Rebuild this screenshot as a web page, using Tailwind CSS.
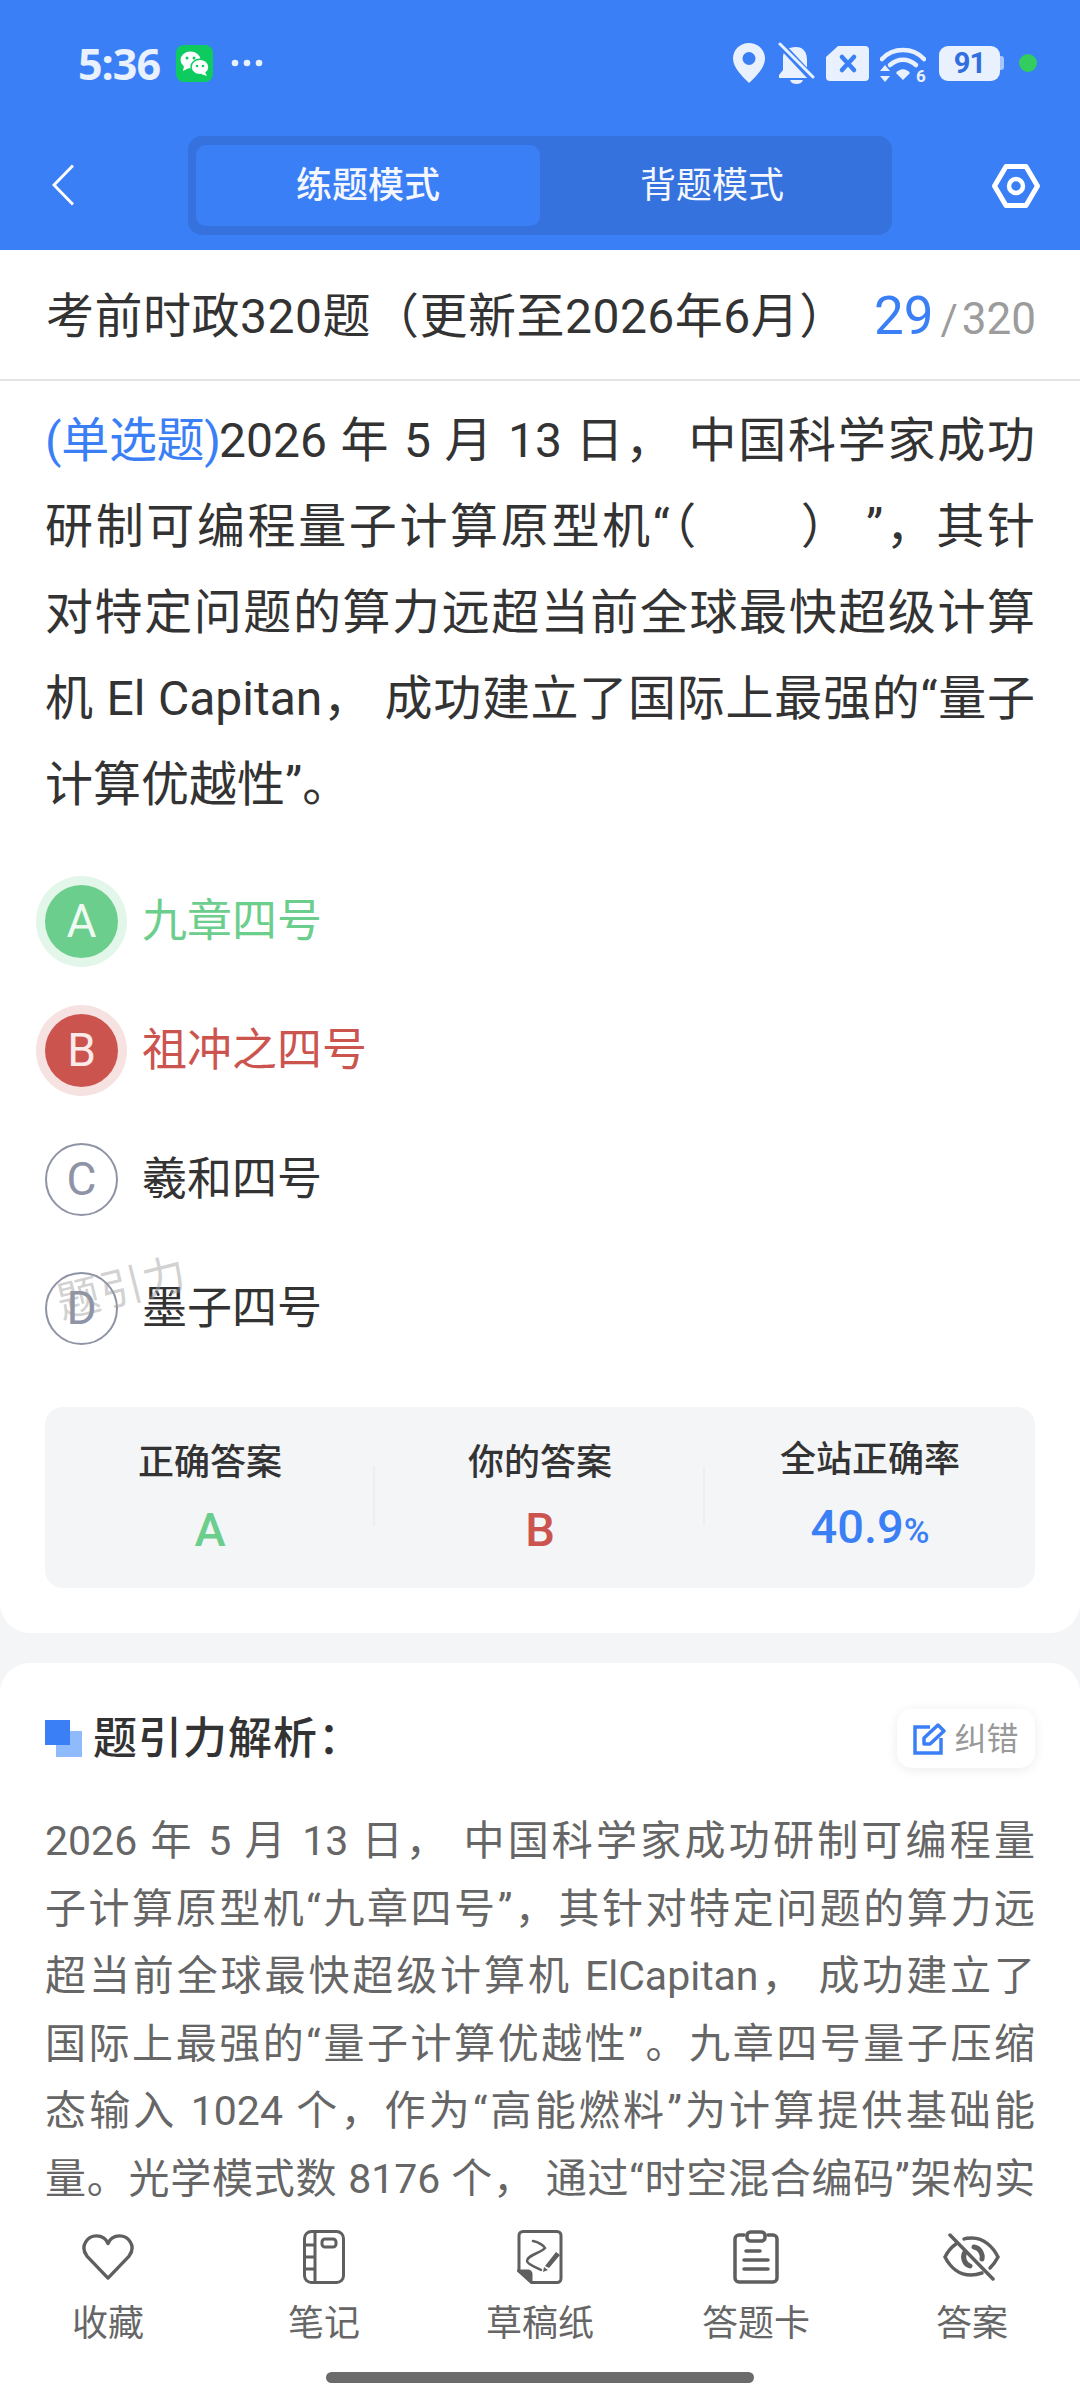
<!DOCTYPE html>
<html lang="zh-CN">
<head>
    <meta charset="UTF-8">
    <meta name="viewport" content="width=device-width, initial-scale=1.0">
    <title>考前时政320题</title>
    <script src="https://cdn.jsdelivr.net/npm/@tailwindcss/browser@4"></script>
</head>
<body class="bg-[#f4f5f7]">
<div class="relative flex flex-col w-[1080px] h-[2400px] overflow-hidden bg-[#f4f5f7] font-['Roboto','Noto_Sans_CJK_SC',sans-serif]">

    <!-- blue header -->
    <header class="h-[250px] shrink-0 bg-[#3b7ff6]">
        <div class="flex items-center h-[126px] pl-[78px] pr-[43px]">
            <span class="text-[43px] font-bold leading-none text-[#e9f0fe] font-['Open_Sans',sans-serif] tracking-[-1px]">5:36</span>
            <svg class="ml-[16px]" width="37" height="37" viewBox="0 0 37 37">
                <rect width="37" height="37" rx="8" fill="#0ecb5f"/>
                <ellipse cx="14.500" cy="15" rx="10" ry="8.500" fill="#fff"/>
                <path d="M8 21l-1 5 6-3z" fill="#fff"/>
                <ellipse cx="24" cy="22" rx="9" ry="7.800" fill="#fff" stroke="#0ecb5f" stroke-width="1.500"/>
                <path d="M29 27l2 4-6-2z" fill="#fff"/>
                <circle cx="11" cy="13" r="1.500" fill="#0ecb5f"/><circle cx="18" cy="13" r="1.500" fill="#0ecb5f"/>
                <circle cx="21" cy="21" r="1.300" fill="#0ecb5f"/><circle cx="27" cy="21" r="1.300" fill="#0ecb5f"/>
            </svg>
            <svg class="ml-[18px]" width="32" height="8" viewBox="0 0 32 8" fill="#e9f0fe">
                <circle cx="4" cy="4" r="3.300"/><circle cx="16" cy="4" r="3.300"/><circle cx="28" cy="4" r="3.300"/>
            </svg>
            <div class="ml-auto flex items-center">
                <svg width="32" height="40" viewBox="0 0 32 40">
                    <path d="M16 0C7 0 0 7 0 15.500 0 25 10 34 16 40c6-6 16-15 16-24.500C32 7 25 0 16 0z" fill="#e9f0fe"/>
                    <circle cx="16" cy="15.500" r="6.500" fill="#3b7ff6"/>
                </svg>
                <svg class="ml-[13px]" width="37" height="42" viewBox="0 0 37 42">
                    <path d="M18 5c8 0 11 6 11 13v10l4 5v3H1v-3l4-5V15c0-6 5-10 13-10z" fill="#e9f0fe"/>
                    <path d="M12 38h13c-1 3-4 4-6.500 4S13 41 12 38z" fill="#e9f0fe"/>
                    <path d="M3 3l31 33" stroke="#3b7ff6" stroke-width="7"/>
                    <path d="M2 2l33 33" stroke="#e9f0fe" stroke-width="3" stroke-linecap="round"/>
                </svg>
                <svg class="ml-[11px]" width="43" height="35" viewBox="0 0 43 35">
                    <path d="M12 0h27a4 4 0 0 1 4 4v27a4 4 0 0 1-4 4H4a4 4 0 0 1-4-4V11z" fill="#e9f0fe"/>
                    <path d="M16 11l12 13M28 11L16 24" stroke="#3b7ff6" stroke-width="4.500" stroke-linecap="round"/>
                </svg>
                <svg class="ml-[11px]" width="46" height="46" viewBox="0 -6 46 46" fill="none">
                    <path d="M2 13C13 1 33 1 44 13" stroke="#e9f0fe" stroke-width="4.500" stroke-linecap="round"/>
                    <path d="M10 19c8-7 18-7 26 0" stroke="#e9f0fe" stroke-width="4.500" stroke-linecap="round"/>
                    <path d="M16 27c4-5 10-5 14 0l-7 7z" fill="#e9f0fe"/>
                    <path d="M5 19l5 6H0zM5 36l5-6H0z" fill="#e9f0fe"/>
                    <text x="36" y="36" font-size="17" font-weight="700" fill="#e9f0fe" font-family="Roboto, sans-serif">6</text>
                </svg>
                <div class="ml-[13px] flex items-center">
                    <span class="flex items-center justify-center w-[61px] h-[35px] rounded-[9px] bg-[#e9f0fe] text-[#2f6fe0] text-[29px] font-bold leading-none font-['Roboto',sans-serif] tracking-[-1px]">91</span>
                    <span class="w-[4px] h-[14px] rounded-r-[3px] bg-[#a9c6fa]"></span>
                </div>
                <span class="ml-[15px] w-[18px] h-[18px] rounded-full bg-[#33cc5e]"></span>
            </div>
        </div>
        <div class="flex items-center h-[99px] mt-[10px] pl-[52px] pr-[40px]">
            <svg class="-mt-[2px]" width="22" height="42" viewBox="0 0 22 42" fill="none"><path d="M21 1.500L2 21l19 19.500" stroke="#fff" stroke-width="3"/></svg>
            <div class="flex items-center ml-[114px] w-[704px] h-[99px] px-[8px] rounded-[14px] bg-[#3672de]">
                <div class="flex items-center justify-center w-[344px] h-[81px] rounded-[10px] bg-[#3b7ff6] text-[36px] font-medium text-[#f4f7fe]">练题模式</div>
                <div class="flex items-center justify-center flex-1 h-[81px] text-[36px] text-[#f4f7fe]">背题模式</div>
            </div>
            <svg class="ml-auto" width="48" height="44" viewBox="0 0 48 44" fill="none">
                <path d="M14 2.500h20L45.500 22 34 41.500H14L2.500 22z" stroke="#fff" stroke-width="5" stroke-linejoin="round"/>
                <circle cx="24" cy="22" r="7" stroke="#fff" stroke-width="4.500"/>
            </svg>
        </div>
    </header>

    <!-- title row -->
    <div class="flex items-center justify-between h-[131px] shrink-0 pt-[4px] pl-[46px] pr-[44px] bg-white border-b-2 border-[#e3e3e3]">
        <h1 class="text-[48px] leading-none tracking-[0.5px] text-[#333] whitespace-nowrap">考前时政320题（更新至2026年6月）</h1>
        <p class="flex items-baseline leading-none whitespace-nowrap">
            <span class="text-[53px] text-[#3b7ff6]">29</span>
            <span class="ml-[7px] text-[42px] text-[#9c9c9c]">/</span>
            <span class="ml-[4px] text-[44px] text-[#9c9c9c]">320</span>
        </p>
    </div>

    <!-- question card -->
    <section class="shrink-0 h-[1252px] px-[45px] pt-[17px] bg-white rounded-b-[30px]">
        <div class="text-[48px] leading-[86px] text-[#333] whitespace-nowrap">
            <p class="text-justify [text-align-last:justify]"><span class="text-[#3b7ff6] tracking-[-2px]">(单选题)</span>2026 年 5 月 13 日， 中国科学家成功</p>
            <p class="text-justify [text-align-last:justify]">研制可编程量子计算原型机“（&nbsp;&nbsp;&nbsp;&nbsp;&nbsp;&nbsp;&nbsp;） ”，其针</p>
            <p class="text-justify [text-align-last:justify]">对特定问题的算力远超当前全球最快超级计算</p>
            <p class="text-justify [text-align-last:justify]">机 El Capitan， 成功建立了国际上最强的“量子</p>
            <p>计算优越性”。</p>
        </div>

        <ul class="relative mt-[29px]">
            <li class="flex items-center h-[129px]">
                <span class="flex items-center justify-center w-[73px] h-[73px] rounded-full bg-[#6bce8c] ring-[9px] ring-[#e3f6ea] text-[46px] text-[#eefaf2]">A</span>
                <span class="ml-[24px] text-[45px] text-[#6bce8c]">九章四号</span>
            </li>
            <li class="flex items-center h-[129px]">
                <span class="flex items-center justify-center w-[73px] h-[73px] rounded-full bg-[#cc544f] ring-[9px] ring-[#f7e2e2] text-[46px] text-[#fbeaea]">B</span>
                <span class="ml-[24px] text-[45px] text-[#cc544f]">祖冲之四号</span>
            </li>
            <li class="flex items-center h-[129px]">
                <span class="flex items-center justify-center w-[73px] h-[73px] rounded-full border-2 border-[#8f93a6] text-[46px] text-[#8f93a6]">C</span>
                <span class="ml-[24px] text-[45px] text-[#333]">羲和四号</span>
            </li>
            <li class="flex items-center h-[129px]">
                <span class="flex items-center justify-center w-[73px] h-[73px] rounded-full border-2 border-[#8f93a6] text-[46px] text-[#8f93a6]">D</span>
                <span class="ml-[24px] text-[45px] text-[#333]">墨子四号</span>
            </li>
            <li class="absolute left-[11px] top-[410px] text-[43px] leading-none tracking-[1px] text-[#9a9a9a]/45 -rotate-[14deg] list-none">题引力</li>
        </ul>

        <div class="grid grid-cols-3 items-center h-[181px] mt-[34px] rounded-[18px] bg-[#f4f5f7]">
            <div class="flex flex-col items-center -mt-[2px]">
                <span class="text-[36px] leading-[44px] font-medium text-[#333]">正确答案</span>
                <span class="mt-[22px] text-[47px] leading-[46px] font-medium text-[#6bce8c]">A</span>
            </div>
            <div class="relative flex flex-col items-center -mt-[2px] before:absolute before:-left-[2px] before:top-[25px] before:h-[60px] before:w-[2px] before:bg-[#eceef0] after:absolute after:right-0 after:top-[25px] after:h-[60px] after:w-[2px] after:bg-[#eceef0]">
                <span class="text-[36px] leading-[44px] font-medium text-[#333]">你的答案</span>
                <span class="mt-[22px] text-[47px] leading-[46px] font-medium text-[#cc544f]">B</span>
            </div>
            <div class="flex flex-col items-center -mt-[2px]">
                <span class="text-[36px] leading-[44px] font-medium text-[#333]">全站正确率</span>
                <span class="mt-[22px] text-[47px] leading-[46px] font-medium text-[#3b7ff6]">40.9<span class="text-[35px]">%</span></span>
            </div>
        </div>
    </section>

    <!-- analysis card -->
    <section class="flex-1 min-h-0 mt-[30px] px-[45px] pt-[46px] overflow-hidden bg-white rounded-t-[30px]">
        <div class="flex items-center justify-between h-[59px]">
            <div class="flex items-center">
                <span class="relative w-[37px] h-[37px]">
                    <span class="absolute right-0 bottom-0 w-[26px] h-[26px] bg-[#8fbafb]"></span>
                    <span class="absolute left-0 top-0 w-[25px] h-[25px] bg-[#3b7ff6]"></span>
                </span>
                <h2 class="ml-[11px] text-[44px] leading-none font-medium tracking-[1px] text-[#333]">题引力解析：</h2>
            </div>
            <button class="flex items-center justify-center w-[138px] h-[59px] rounded-[15px] bg-white shadow-[0_2px_12px_rgba(0,0,0,0.08)] text-[32px] text-[#999]">
                <svg width="33" height="32" viewBox="0 0 33 32" fill="none">
                    <path d="M17 4H2v26h26V15" stroke="#3b7ff6" stroke-width="3.500"/>
                    <path d="M11 21v-6L25 2l6 6-14 13z" stroke="#3b7ff6" stroke-width="3.500" stroke-linejoin="round"/>
                </svg>
                <span class="ml-[8px]">纠错</span>
            </button>
        </div>
        <div class="mt-[40px] text-[41px] leading-[67.5px] text-[#666] whitespace-nowrap">
            <p class="text-justify [text-align-last:justify]">2026 年 5 月 13 日， 中国科学家成功研制可编程量</p>
            <p class="text-justify [text-align-last:justify]">子计算原型机“九章四号”，其针对特定问题的算力远</p>
            <p class="text-justify [text-align-last:justify]">超当前全球最快超级计算机 ElCapitan， 成功建立了</p>
            <p class="text-justify [text-align-last:justify]">国际上最强的“量子计算优越性”。九章四号量子压缩</p>
            <p class="text-justify [text-align-last:justify]">态输入 1024 个，作为“高能燃料”为计算提供基础能</p>
            <p class="text-justify [text-align-last:justify]">量。光学模式数 8176 个， 通过“时空混合编码”架构实</p>
        </div>
    </section>

    <!-- bottom toolbar -->
    <nav class="shrink-0 h-[190px] bg-white">
        <div class="grid grid-cols-5 h-[140px] text-[36px] text-[#666]">
            <div class="flex flex-col items-center">
                <div class="flex items-center justify-center h-[84px] w-full pt-[10px]">
                    <svg width="52" height="46" viewBox="0 0 54 48" fill="none">
                        <path d="M27 46L5 23C-3 12 6 2 15 2c6 0 10 3 12 8 2-5 6-8 12-8 9 0 18 10 10 21z" stroke="#5f5f5f" stroke-width="3.500" stroke-linejoin="round"/>
                    </svg>
                </div>
                <span class="mt-[8px] leading-[44px]">收藏</span>
            </div>
            <div class="flex flex-col items-center">
                <div class="flex items-center justify-center h-[84px] w-full pt-[10px]">
                    <svg width="42" height="54" viewBox="0 0 42 54" fill="none" stroke="#5f5f5f" stroke-width="3">
                        <rect x="1.500" y="1.500" width="39" height="51" rx="7"/>
                        <path d="M12 2v50M2 15h10M2 27h10M2 39h10"/>
                        <rect x="19" y="9" width="14" height="8" rx="3"/>
                    </svg>
                </div>
                <span class="mt-[8px] leading-[44px]">笔记</span>
            </div>
            <div class="flex flex-col items-center">
                <div class="flex items-center justify-center h-[84px] w-full pt-[10px]">
                    <svg width="46" height="54" viewBox="0 0 46 54" fill="none" stroke="#5f5f5f" stroke-width="3">
                        <path d="M6 1.500h34a4 4 0 0 1 4 4v43a4 4 0 0 1-4 4H15L2 41V5.500a4 4 0 0 1 4-4z"/>
                        <path d="M2 41h9a3 3 0 0 1 3 3v8z" fill="#5f5f5f"/>
                        <path d="M16 11c6 1 11 5 12 7-4 5-18 7-18 13 0 3 8 6 14 9" stroke-width="2.500" stroke-linecap="round"/>
                        <path d="M28 36l11-14 4 3-11 13z" fill="#5f5f5f" stroke="none"/>
                        <path d="M27 37l-1 5 5-2z" fill="#5f5f5f" stroke="none"/>
                    </svg>
                </div>
                <span class="mt-[8px] leading-[44px]">草稿纸</span>
            </div>
            <div class="flex flex-col items-center">
                <div class="flex items-center justify-center h-[84px] w-full pt-[10px]">
                    <svg width="46" height="54" viewBox="0 0 46 54" fill="none" stroke="#5f5f5f" stroke-width="3.500" stroke-linecap="round">
                        <path d="M11 5H6a4 4 0 0 0-4 4v39a4 4 0 0 0 4 4h34a4 4 0 0 0 4-4V9a4 4 0 0 0-4-4h-5"/>
                        <rect x="14" y="2" width="18" height="9" rx="3.500"/>
                        <path d="M13 21h14M11 30h24M11 39h24"/>
                    </svg>
                </div>
                <span class="mt-[8px] leading-[44px]">答题卡</span>
            </div>
            <div class="flex flex-col items-center">
                <div class="flex items-center justify-center h-[84px] w-full pt-[10px]">
                    <svg width="58" height="48" viewBox="0 0 58 48" fill="none" stroke="#5f5f5f" stroke-width="3.500" stroke-linecap="round">
                        <path d="M13 11C7 15 4 20 2 24c5 10 14 18 26 18 4 0 8-1 11-2"/>
                        <path d="M21 6c2-1 5-1 8-1 12 0 21 9 26 19-2 4-5 8-8 11"/>
                        <path d="M22 19c-3 5-1 12 5 14M31 14c6 1 9 7 8 12" stroke-width="5"/>
                        <path d="M7 2l43 44"/>
                    </svg>
                </div>
                <span class="mt-[8px] leading-[44px]">答案</span>
            </div>
        </div>
        <div class="mx-auto mt-[22px] w-[428px] h-[11px] rounded-full bg-[#6b6b6b]"></div>
    </nav>
</div>
</body>
</html>
